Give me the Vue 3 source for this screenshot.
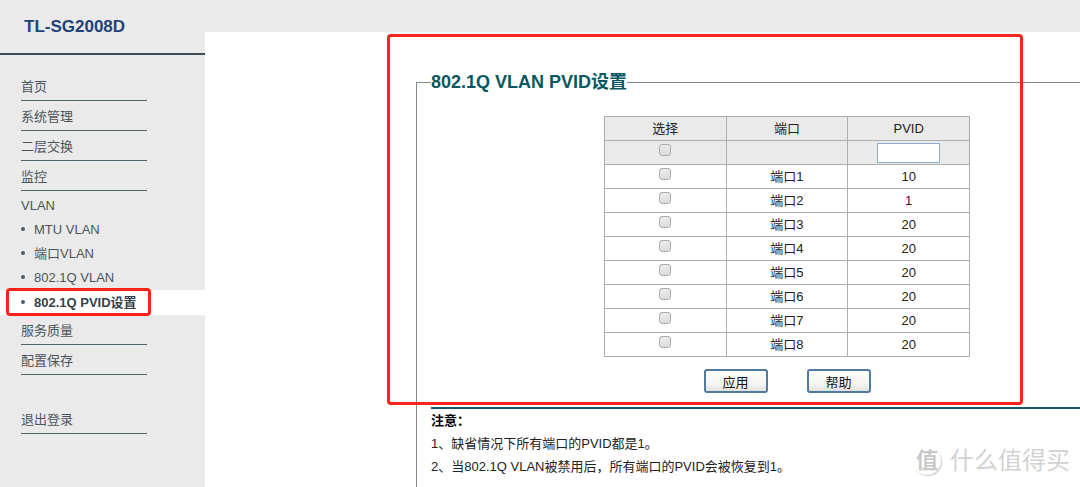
<template>
  <div class="page">
    <aside class="sidebar">
      <h1 class="model">TL-SG2008D</h1>
      <nav class="menu">
        <a v-for="item in topMenu" :key="item" href="#" class="menuItem">{{ item }}</a>
        <a href="#" class="menuGroup">VLAN</a>
        <ul class="subMenu">
          <li
            v-for="item in vlanMenu"
            :key="item"
            class="subItem"
            :class="{ active: item === current }"
          >
            <a href="#">{{ item }}</a>
            <span v-if="item === current" class="mark menuMark"></span>
          </li>
        </ul>
        <a v-for="item in bottomMenu" :key="item" href="#" class="menuItem">{{ item }}</a>
        <a href="#" class="menuItem logout">退出登录</a>
      </nav>
    </aside>

    <main class="main">
      <form class="content" @submit.prevent>
        <fieldset class="panel">
          <legend class="legend">802.1Q VLAN PVID设置</legend>
          <table class="portTable">
            <thead>
              <tr>
                <th>选择</th>
                <th>端口</th>
                <th>PVID</th>
              </tr>
              <tr>
                <td class="checkCell">
                  <input v-model="allChecked" type="checkbox" class="check" aria-label="选择" />
                </td>
                <td></td>
                <td class="inputCell">
                  <input v-model="pvid" type="text" class="pvidInput" aria-label="PVID" />
                </td>
              </tr>
            </thead>
            <tbody>
              <tr v-for="port in ports" :key="port.name">
                <td class="checkCell">
                  <input
                    v-model="port.checked"
                    type="checkbox"
                    class="check"
                    :aria-label="port.name"
                  />
                </td>
                <td>{{ port.name }}</td>
                <td>{{ port.pvid }}</td>
              </tr>
            </tbody>
          </table>
          <div class="buttons">
            <button type="button" class="button" @click="onClickApply">应用</button>
            <button type="button" class="button">帮助</button>
          </div>
          <div class="notes">
            <p class="notesTitle">注意：</p>
            <p>1、缺省情况下所有端口的PVID都是1。</p>
            <p>2、当802.1Q VLAN被禁用后，所有端口的PVID会被恢复到1。</p>
          </div>
        </fieldset>
      </form>
      <span class="mark panelMark"></span>
    </main>

    <div class="watermark">
      <span class="watermarkLogo">值</span>
      <span>什么值得买</span>
    </div>
  </div>
</template>

<script setup>
import { computed, ref } from 'vue';

const topMenu = ['首页', '系统管理', '二层交换', '监控'];
const vlanMenu = ['MTU VLAN', '端口VLAN', '802.1Q VLAN', '802.1Q PVID设置'];
const bottomMenu = ['服务质量', '配置保存'];
const current = '802.1Q PVID设置';

const pvid = ref('');
const ports = ref(
  [10, 1, 20, 20, 20, 20, 20, 20].map((value, index) => ({
    name: '端口' + (index + 1),
    pvid: value,
    checked: false,
  })),
);

const allChecked = computed({
  get: () => ports.value.every((port) => port.checked),
  set: (value) => {
    ports.value.forEach((port) => {
      port.checked = value;
    });
  },
});

const onClickApply = () => {
  if (!pvid.value) return;
  ports.value.forEach((port) => {
    if (port.checked) port.pvid = pvid.value;
  });
};
</script>

<style>
body {
  margin: 0;
}
</style>

<style scoped>
.page {
  position: relative;
  display: flex;
  height: 100vh;
  overflow: hidden;
  background-color: #fff;
  font-family: 'Liberation Sans', 'Noto Sans CJK SC', sans-serif;
  font-size: 13px;
  color: #222;
}

.sidebar {
  flex: 0 0 205px;
  background-color: #eaeaea;
}

.model {
  margin: 0;
  padding-left: 24px;
  border-bottom: 2px solid #3d4d58;
  font-size: 17px;
  line-height: 53px;
  color: #1f4379;
}

.menu {
  padding-top: 16px;

  a {
    color: #4a555b;
    text-decoration: none;
  }

  .menuItem {
    display: block;
    width: 126px;
    margin-left: 21px;
    padding-top: 2px;
    border-bottom: 1px solid #54646b;
    line-height: 27px;
  }

  .menuGroup {
    display: block;
    padding: 3px 0 0 21px;
    line-height: 24px;
  }

  .logout {
    margin-top: 29px;
  }
}

.subMenu {
  margin: 0;
  padding: 0;
  list-style: none;

  .subItem {
    position: relative;
    display: flex;
    align-items: center;
    padding-left: 21px;
    line-height: 24px;

    &::before {
      content: '';
      width: 4px;
      height: 4px;
      margin: 0 9px 2px 0;
      border-radius: 2px;
      background-color: #4a5a68;
    }

    &.active {
      background-color: #fff;
      font-weight: bold;
      line-height: 25px;

      a {
        color: #35424c;
      }
    }
  }
}

.main {
  position: relative;
  flex: 1;
  min-width: 0;
  border-top: 32px solid #eaeaea;
}

.content {
  /* the panel runs on past the right edge of the frame */
  margin: 38px -78px 0 211px;
}

.panel {
  min-width: 0;
  margin: 0;
  padding: 0 14px 40px;
  border: 1px solid #80898d;
}

.legend {
  padding: 0;
  font-size: 18px;
  font-weight: bold;
  line-height: 24px;
  color: #085761;
}

.portTable {
  width: 366px;
  margin: 22px auto 0;
  border-collapse: collapse;
  table-layout: fixed;
  text-align: center;

  thead {
    background-color: #eaeaea;
  }

  th,
  td {
    height: 23px;
    padding: 0;
    border: 1px solid #adadad;
    font-weight: normal;
    line-height: 20px;
  }

  .checkCell {
    padding-bottom: 6px;
    height: 17px;
    line-height: 12px;
  }

  .inputCell {
    line-height: 0;
  }
}

.check {
  appearance: none;
  width: 12px;
  height: 12px;
  margin: 0;
  border: 1px solid #adadad;
  border-radius: 3px;
  background: linear-gradient(#ececec, #dcdcdc);
  vertical-align: top;

  &:checked {
    background: #5a7f9c;
  }
}

.pvidInput {
  box-sizing: border-box;
  width: 63px;
  height: 20px;
  padding: 0 4px;
  border: 1px solid #8facc8;
  background-color: #fff;
  font: inherit;
}

.buttons {
  display: flex;
  justify-content: center;
  gap: 39px;
  margin-top: 12px;
}

.button {
  width: 64px;
  height: 24px;
  padding: 3px 0 0;
  border: 2px solid #517a9f;
  border-radius: 3px;
  background: linear-gradient(#fff, #f3f3f1 70%, #e2e1da);
  font: inherit;
  line-height: 17px;
  color: #111;
}

.notes {
  margin-top: 14px;
  border-top: 2px solid #155966;
  line-height: 23px;

  p {
    margin: 0;
  }

  .notesTitle {
    font-weight: bold;
    color: #000;
  }
}

/* red highlight frames */
.mark {
  position: absolute;
  box-sizing: border-box;
  border: 3px solid #fc2419;
  border-radius: 4px;
  pointer-events: none;
}

.menuMark {
  top: -2px;
  left: 6px;
  width: 145px;
  height: 28px;
}

.panelMark {
  top: 2px;
  left: 182px;
  width: 636px;
  height: 371px;
}

.watermark {
  position: absolute;
  right: 10px;
  bottom: 8px;
  display: flex;
  align-items: center;
  gap: 9px;
  font-size: 24px;
  line-height: 36px;
  color: #d2d2d2;

  .watermarkLogo {
    width: 28px;
    height: 28px;
    border-radius: 14px;
    box-shadow: 1px 1px 1px #ccc;
    font-size: 22px;
    font-weight: bold;
    line-height: 28px;
    text-align: center;
    color: #c8c8c8;
  }
}
</style>
